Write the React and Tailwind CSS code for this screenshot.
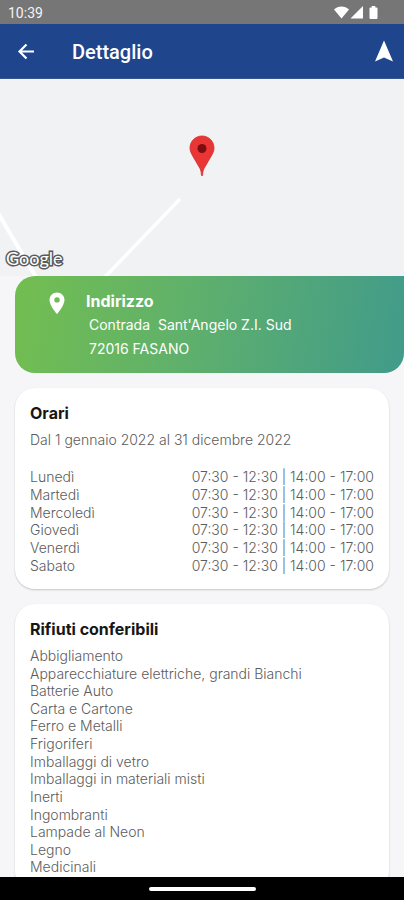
const hours = [
  { day: 'Lunedì', time: '07:30 - 12:30 | 14:00 - 17:00' },
  { day: 'Martedì', time: '07:30 - 12:30 | 14:00 - 17:00' },
  { day: 'Mercoledì', time: '07:30 - 12:30 | 14:00 - 17:00' },
  { day: 'Giovedì', time: '07:30 - 12:30 | 14:00 - 17:00' },
  { day: 'Venerdì', time: '07:30 - 12:30 | 14:00 - 17:00' },
  { day: 'Sabato', time: '07:30 - 12:30 | 14:00 - 17:00' },
];

const wasteTypes = [
  'Abbigliamento',
  'Apparecchiature elettriche, grandi Bianchi',
  'Batterie Auto',
  'Carta e Cartone',
  'Ferro e Metalli',
  'Frigoriferi',
  'Imballaggi di vetro',
  'Imballaggi in materiali misti',
  'Inerti',
  'Ingombranti',
  'Lampade al Neon',
  'Legno',
  'Medicinali',
];

function StatusBar() {
  return (
    <div className="flex h-6 shrink-0 items-center justify-between bg-[#767676] pl-2 pr-6 pt-0.5 font-['Roboto',sans-serif] text-sm leading-5 text-gray-100">
      <span>10:39</span>
      <svg className="h-4 w-12" viewBox="0 0 48 16" fill="#fff" aria-hidden="true">
        <path d="M2 4.500C6 .5 13 .5 17 4.500L9.500 13.500Z" />
        <path d="M31 1V13.500H18.500Z" />
        <path d="M38.500 2.500h1.200V1h3.600v1.500h1.200q1 0 1 1v9.500q0 1-1 1h-6q-1 0-1-1V3.500q0-1 1-1Z" />
      </svg>
    </div>
  );
}

function AppBar() {
  return (
    <header className="flex h-[55px] shrink-0 items-center border-b border-[#36568f] bg-[#1f468d] pl-4 pr-2 text-white">
      <button type="button" aria-label="Indietro" className="flex size-5 items-center justify-center">
        <svg className="size-5" viewBox="0 0 20 20" fill="none" stroke="currentColor" strokeWidth="2.200" aria-hidden="true">
          <path d="M18 10.500H3.500M10.500 3.500L3.500 10.500l7 7" />
        </svg>
      </button>
      <h1 className="ml-9 flex-1 pt-0.5 font-['Roboto',sans-serif] text-xl font-medium">Dettaglio</h1>
      <button type="button" aria-label="Naviga" className="flex size-6 items-center justify-center">
        <svg className="size-6" viewBox="0 0 24 24" fill="currentColor" aria-hidden="true">
          <path d="M12 1.500L21 22.500 12 18.500 3 22.500Z" />
        </svg>
      </button>
    </header>
  );
}

function MapView() {
  return (
    <div className="relative h-[197px] overflow-hidden bg-[#f0f2f4]">
      <svg className="absolute left-0 top-0 h-[197px] w-[404px]" viewBox="0 0 404 197" fill="none" aria-hidden="true">
        <path d="M-2 134L37 200" stroke="#fff" strokeWidth="4" />
        <path d="M104 199L180 120" stroke="#fff" strokeWidth="3.500" />
      </svg>
      <svg className="absolute left-1/2 top-[56px] h-[41px] w-[26px] -translate-x-1/2" viewBox="0 0 26 41" aria-hidden="true">
        <path
          d="M13 1C6.300 1 1 6.300 1 13c0 3.300 1.500 6 3.300 9L11.300 34q.9 2 1.200 6.500h1q.3-4.500 1.200-6.500L21.700 22C23.500 19 25 16.300 25 13 25 6.300 19.700 1 13 1Z"
          fill="#ea3535"
          stroke="#d32d30"
          strokeWidth=".8"
        />
        <circle cx="13" cy="13.500" r="4.500" fill="#7d0d10" />
      </svg>
      <span className="absolute bottom-1.5 left-1.5 font-['Lato',sans-serif] text-lg font-normal leading-6 text-white [-webkit-text-stroke:3px_#5a5a5a] [paint-order:stroke_fill]">
        Google
      </span>
    </div>
  );
}

function AddressCard() {
  return (
    <section className="ml-[15px] flex rounded-l-[20px] rounded-br-[20px] bg-linear-[100deg,#73be50,#5fb06c_45%,#419b8a] pb-3 pl-[30px] pt-[13px] text-white">
      <svg className="mt-0.5 h-6 w-6" viewBox="0 0 24 24" fill="currentColor" aria-hidden="true">
        <path
          fillRule="evenodd"
          d="M12 1.500C7.800 1.500 4.500 4.800 4.500 8.900 4.500 14.500 12 23 12 23S19.500 14.500 19.500 8.900C19.500 4.800 16.200 1.500 12 1.500Zm0 4.700a2.700 2.700 0 1 1 0 5.400 2.700 2.700 0 0 1 0-5.400Z"
        />
      </svg>
      <div className="ml-[17px]">
        <h2 className="text-base font-bold leading-6">Indirizzo</h2>
        <address className="whitespace-pre pl-[3px] text-sm not-italic leading-6">
          {'Contrada  Sant\'Angelo Z.I. Sud\n72016 FASANO'}
        </address>
      </div>
    </section>
  );
}

function Card({ title, children }) {
  return (
    <section className="mx-[15px] mt-[15px] rounded-[20px] bg-white px-[15px] pb-[15px] pt-[15px] shadow-[0_1px_2px_rgba(0,0,0,0.2)]">
      <h2 className="text-base font-bold leading-5 text-[#161616]">{title}</h2>
      {children}
    </section>
  );
}

export default function App() {
  return (
    <div className="flex h-screen flex-col bg-[#f6f6f9] font-['Inter',sans-serif]">
      <StatusBar />
      <AppBar />
      <main className="min-h-0 flex-1 overflow-hidden">
        <MapView />
        <AddressCard />
        <Card title="Orari">
          <p className="mt-2 text-sm font-light leading-[17px] text-[#5c5c5c]">
            Dal 1 gennaio 2022 al 31 dicembre 2022
          </p>
          <table className="mt-5 h-[106px] w-full text-sm font-light leading-[17px] text-[#5c5c5c]">
            <tbody>
              {hours.map((row) => (
                <tr key={row.day}>
                  <th scope="row" className="p-0 text-left font-light">{row.day}</th>
                  <td className="p-0 text-right">{row.time}</td>
                </tr>
              ))}
            </tbody>
          </table>
        </Card>
        <Card title="Rifiuti conferibili">
          <ul className="mt-2 grid h-[229px] auto-rows-fr text-sm font-light leading-[17px] text-[#5c5c5c]">
            {wasteTypes.map((name) => (
              <li key={name}>{name}</li>
            ))}
          </ul>
        </Card>
      </main>
      <div className="flex h-[23px] shrink-0 items-center justify-center bg-black">
        <div className="h-1 w-[107px] rounded-full bg-white" />
      </div>
    </div>
  );
}
